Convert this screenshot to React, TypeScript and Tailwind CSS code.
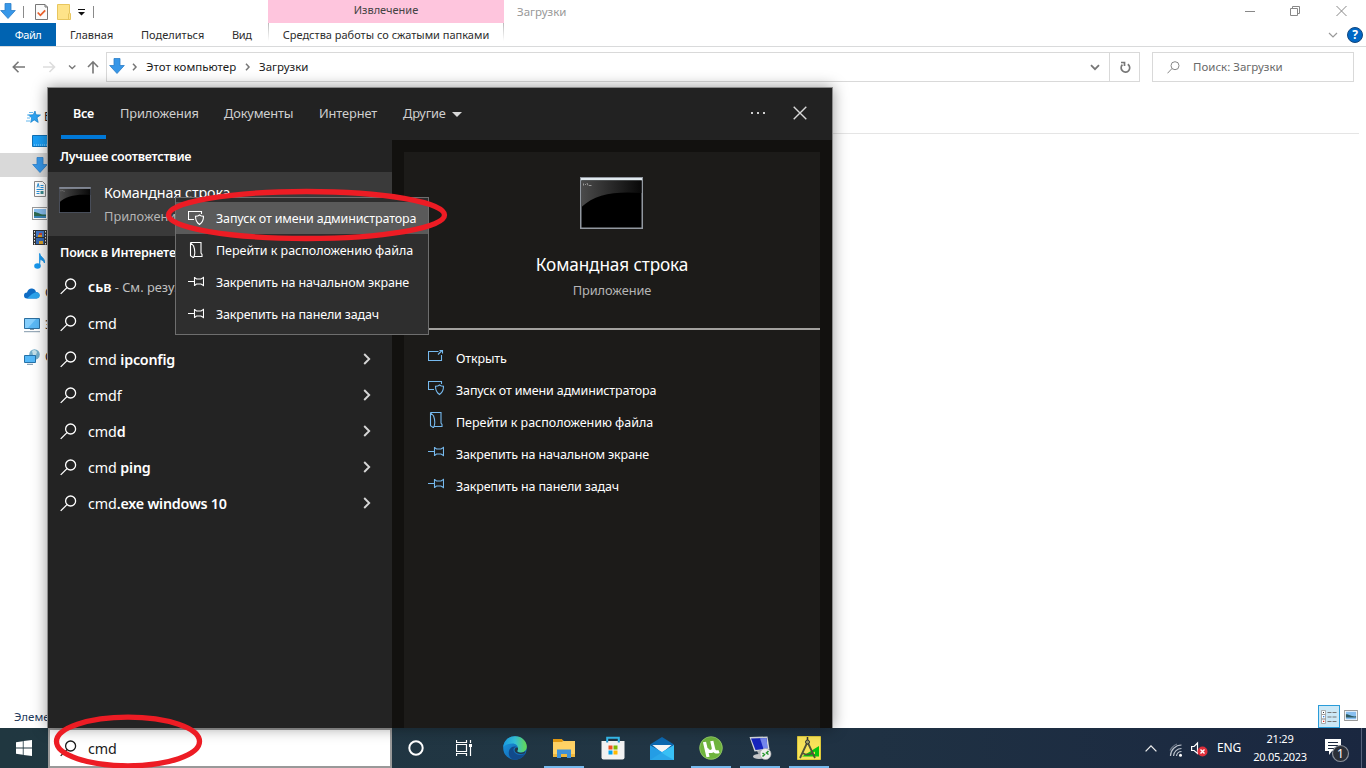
import type { ReactNode } from "react";

type P = { className?: string };

const DownArrow = ({ className = "" }: P) => (
  <svg className={className} width="16" height="16" viewBox="0 0 16 16">
    <path d="M5 .5h6v7h4.300L8 15.500.700 7.500H5z" fill="#3797e8" stroke="#2c7dc8" strokeWidth=".8" />
  </svg>
);
const Search = ({ className = "" }: P) => (
  <svg className={className} width="17" height="17" viewBox="0 0 17 17" fill="none" stroke="currentColor" strokeWidth="1.3">
    <circle cx="10.600" cy="6" r="5" />
    <path d="M7 9.600.700 15.900" />
  </svg>
);
const Admin = () => (
  <svg width="16" height="16" viewBox="0 0 16 16" fill="none" stroke="currentColor" strokeWidth="1.1">
    <path d="M13.500 4V1.500h-13v8H6" />
    <path d="M11.500 5c-1.200 1-2.500 1.300-4 1.300 0 4 .8 6.200 4 8.200 3.200-2 4-4.200 4-8.200-1.500 0-2.800-.3-4-1.300z" />
  </svg>
);
const FileLoc = () => (
  <svg width="16" height="16" viewBox="0 0 16 16" fill="none" stroke="currentColor" strokeWidth="1.1">
    <path d="M2.500.500h10.500v10.500l1 1.500v2H6M2.500.500v13.300l3 1.900c1.500-3 1.500-8 0-12L2.500.800" />
  </svg>
);
const Pin = () => (
  <svg width="16" height="16" viewBox="0 0 16 16" fill="none" stroke="currentColor" strokeWidth="1.1">
    <path d="M0 7.500h6.500M6.500 3v9M6.500 3.500l2 1.500h4.500l2.500-1.500v8L13 10H8.500l-2 1.500" />
  </svg>
);
const Open = () => (
  <svg width="16" height="16" viewBox="0 0 16 16" fill="none" stroke="currentColor" strokeWidth="1.1">
    <path d="M10.500 3.500H.500v9h13V7M10 6.500l4-4M11.500 2.500h3V5.500" />
  </svg>
);
const Picture = () => (
  <svg width="16" height="13" viewBox="0 0 16 13">
    <rect x=".5" y=".5" width="15" height="12" fill="#fff" stroke="#9a9a9a" />
    <path d="M2 2h12v9H2z" fill="#88bff0" />
    <path d="M2 5c4 0 6 3 12 2.500V9H2z" fill="#2e6b52" />
    <path d="M2 9h12v2H2z" fill="#3c86b8" />
  </svg>
);

const Console = ({ className = "", big = false }: P & { big?: boolean }) => (
  <svg className={className} width={big ? 63 : 32} height={big ? 52 : 26} viewBox="0 0 63 52" preserveAspectRatio="none">
    <defs>
      <linearGradient id="glass" x1="0" x2="1">
        <stop offset="0" stopColor="#4a4a4a" />
        <stop offset="1" stopColor="#080808" />
      </linearGradient>
    </defs>
    <rect x=".7" y=".7" width="61.600" height="50.600" fill="#000" stroke={big ? "#9298a0" : "#596070"} strokeWidth="1.600" />
    <path d="M1.500 3.500h60V16C35 14 15 17 1.500 30z" fill="url(#glass)" />
    <path d="M1 1h61v2.300H1z" fill={big ? "#e0e9ee" : "#b8c0d0"} />
    <path d="M3.500 6.500v2M5 7.500h1M7 6l1 2.500M9 8.500h2.500" stroke="#999" />
  </svg>
);

const menu: [ReactNode, string, string][] = [
  [<Admin />, "Запуск от имени администратора", "tracking-[-0.14px]"],
  [<FileLoc />, "Перейти к расположению файла", "tracking-[-0.04px]"],
  [<Pin />, "Закрепить на начальном экране", "tracking-[-0.15px]"],
  [<Pin />, "Закрепить на панели задач", "tracking-[-0.15px]"],
];

const suggestions: [string, string, boolean][] = [
  ["cmd", "", false],
  ["cmd ", "ipconfig", true],
  ["cmdf", "", true],
  ["cmd", "d", true],
  ["cmd ", "ping", true],
  ["cmd", ".exe windows 10", true],
];

function TitleBar() {
  return (
    <header className="flex h-[23px] items-center">
      <DownArrow className="-mt-px" />
      <span className="ml-[7px] h-3 w-px bg-[#8a8a8a]" />
      <svg className="ml-[11px]" width="13" height="16" viewBox="0 0 13 16">
        <path d="M.5.5H10L12.500 3v12.500H.5z" fill="#fafafa" stroke="#777" />
        <path d="M10 .5V3h2.500" fill="none" stroke="#777" />
        <path d="m2.700 8.500 2.700 2.800 4.800-5" fill="none" stroke="#e8602c" strokeWidth="1.800" />
      </svg>
      <svg className="ml-[9px]" width="14" height="16" viewBox="0 0 14 16">
        <path d="M.5.5h12v9h1v6H.5z" fill="#fee389" stroke="#e8c65e" />
        <path d="M11.500 9.500v6" stroke="#e8c65e" />
      </svg>
      <svg className="ml-[7px] mt-[3px]" width="7" height="8" viewBox="0 0 7 8">
        <path d="M0 0h7v1H0zM0 3h7L3.500 6.500z" fill="#111" />
      </svg>
      <span className="ml-2 h-3 w-px bg-[#8a8a8a]" />
      <div className="ml-[174px] h-[23px] w-[236px] bg-[#fec5dd] text-center text-[11px] leading-[20px] text-[#444]">Извлечение</div>
      <span className="ml-[13px] text-[11.500px] text-[#999]">Загрузки</span>
      <div className="ml-auto flex items-center pr-[18px] text-[#888]">
        <svg className="-mt-[2px]" width="104" height="12" viewBox="0 0 104 12" fill="none" stroke="currentColor">
          <path d="M1 6.500h10M46.500 3.500h7v7h-7zM48.500 3V1.500h7v7h-2M92.500 1l10 10M102.500 1l-10 10" />
        </svg>
      </div>
    </header>
  );
}

function RibbonTabs() {
  return (
    <nav className="flex h-6 border-b border-[#d9dadb] text-[11px] leading-6 text-[#2d2d2d]">
      <div className="h-[23px] w-14 bg-[#0063b1] text-center tracking-[-0.5px] text-white">Файл</div>
      <span className="ml-[14px] w-[71px]">Главная</span>
      <span className="w-[91px]">Поделиться</span>
      <span className="w-9 tracking-[-0.4px]">Вид</span>
      <span className="h-[18px] w-px bg-gradient-to-b from-[#bbb] to-white" />
      <span className="w-[234px] text-center">Средства работы со сжатыми папками</span>
      <span className="h-[18px] w-px bg-gradient-to-b from-[#bbb] to-white" />
      <div className="ml-auto flex items-center gap-[9px] pr-[3px]">
        <svg width="10" height="6" viewBox="0 0 10 6" fill="none" stroke="#999" strokeWidth="1.200"><path d="m1 1 4 4 4-4" /></svg>
        <span className="flex h-4 w-4 items-center justify-center rounded-full border border-[#12477f] bg-[#0067c5] text-[12px] font-bold leading-4 text-white">?</span>
      </div>
    </nav>
  );
}

function AddressBar() {
  return (
    <div className="flex h-[41px] items-center text-[11.5px] text-[#1b1b1b]">
      <svg className="-mt-px ml-3" width="88" height="16" viewBox="0 0 88 16" fill="none" stroke="#777" strokeWidth="1.600">
        <path d="M1.500 8H13M6.500 2.800 1.300 8l5.200 5.200" />
        <path d="M31 8h11.500M37.500 3l5 5-5 5" stroke="#ddd" />
        <path d="m57 6.500 3.200 3 3.200-3" strokeWidth="1.300" />
        <path d="M81 14.500V3M76 8l5-5.200L86 8" />
      </svg>
      <div className="-mt-px ml-[6px] flex h-[30px] w-[1034px] items-center border border-[#d9d9d9]">
        <DownArrow className="ml-[2px] -mt-[3px]" />
        <svg className="ml-[7px]" width="6" height="8" viewBox="0 0 6 8" fill="none" stroke="#777" strokeWidth="1.500"><path d="m1 .8 3 3.200-3 3.200" /></svg>
        <span className="-mt-px ml-2 w-[91px]">Этот компьютер</span>
        <svg className="ml-[8px]" width="6" height="8" viewBox="0 0 6 8" fill="none" stroke="#777" strokeWidth="1.500"><path d="m1 .8 3 3.200-3 3.200" /></svg>
        <span className="-mt-px ml-2">Загрузки</span>
        <svg className="ml-auto mr-[9px] mt-px" width="10" height="7" viewBox="0 0 10 7" fill="none" stroke="#777" strokeWidth="1.800"><path d="m1 1.200 4 4 4-4" /></svg>
        <div className="flex h-full w-[30px] items-center justify-center border-l border-[#d9d9d9]">
          <svg width="12" height="13" viewBox="0 0 12 13" fill="none" stroke="#777" strokeWidth="1.700">
            <path d="M8.800 3.200A4.300 4.300 0 1 1 3.400 3.700" />
            <path d="M2 1.500h3.500V5" />
          </svg>
        </div>
      </div>
      <div className="-mt-px ml-3 flex h-[30px] w-[202px] items-center border border-[#d9d9d9] pl-[14px] text-[#6a6a6a]">
        <svg width="13" height="13" viewBox="0 0 13 13" fill="none" stroke="#888"><circle cx="8" cy="4.700" r="4" /><path d="M5 7.500.500 12.300" /></svg>
        <span className="-mt-px ml-[13px]">Поиск: Загрузки</span>
      </div>
    </div>
  );
}

function NavTree() {
  return (
    <aside className="flex w-12 flex-col pt-[17px] text-[12px] text-[#222]">
      <div className="flex h-6 items-center gap-[3px] pl-[26px]">
        <svg className="shrink-0" width="15" height="14" viewBox="0 0 15 14">
          <path d="m9 1 1 3.800 4.500.2-3.500 2.700 1.200 4.700-4-2.500-3.500 2.500 1-4.500L2.500 5l4.700-.2z" fill="#2ea3f2" stroke="#1380cc" strokeWidth=".7" />
          <path d="M3 2.500h4M1 5h3M1 8h3M0 11h4" stroke="#65b8ee" />
        </svg>
        <span>Б</span>
      </div>
      <div className="flex h-6 items-center pl-8">
        <svg width="16" height="12" viewBox="0 0 16 12"><path d="M.5.500h18v11H.5z" fill="#1ba0f7" stroke="#1070b5" /><path d="M2 10h14" stroke="#9ad5ff" strokeDasharray="1 1" /></svg>
      </div>
      <div className="flex h-6 items-center bg-[#d9d9d9] pl-8"><DownArrow /></div>
      <div className="flex h-6 items-center pl-[34px]">
        <svg width="12" height="16" viewBox="0 0 12 16"><path d="M.5.500h8l3 3v12H.5z" fill="#fff" stroke="#8a8a8a" /><path d="M6.500 4.500h3M6.500 6.500h3M2.500 8.500h7M2.500 10.500h3M2.500 12.500h3M3 6.500l1.200-4 1 4" stroke="#2692dc" fill="none" /><path d="M6.500 10h3v3h-3z" fill="#3d8d90" /></svg>
      </div>
      <div className="flex h-6 items-center pl-8"><Picture /></div>
      <div className="flex h-6 items-center pl-[33px]">
        <svg width="14" height="15" viewBox="0 0 14 15"><path d="M0 0h14v15H0z" fill="#333" /><path d="M3 1h8v6H3z" fill="#4278c8" /><path d="M3 8h8v6H3z" fill="#3569b4" /><path d="M5 5h4v2H5zM6 11h4v3H6z" fill="#dba32a" /><path d="M6 3h3v2H6z" fill="#cb4237" /><path d="M1.500 1v14M12.500 1v14" stroke="#eee" strokeDasharray="1.500 1.500" /></svg>
      </div>
      <div className="flex h-6 items-center pl-[34px]">
        <svg width="12" height="16" viewBox="0 0 12 16"><ellipse cx="3.500" cy="13" rx="3.300" ry="2.700" fill="#1898ee" /><path d="M5.700 13V.5C6 4 11 4.500 10.500 10 9.500 7.500 8 7 6.500 6.500" fill="#1898ee" stroke="#1898ee" strokeWidth="1" /></svg>
      </div>
      <div className="mt-2 flex h-6 items-center gap-[5px] pl-6">
        <svg className="shrink-0" width="16" height="11" viewBox="0 0 16 11"><path d="M3 10.500a3 3 0 0 1 0-6C4 1 6.500 0 9 .8c2 .5 2.600 2 3 3.200a3.300 3.300 0 0 1 .5 6.500z" fill="#0f6cc4" /><path d="m3 10.500 5-4.500 3-1.500c3-1 5 1 4.900 3-.1 2-1.500 3-3 3z" fill="#2ea4ec" /></svg>
        <span>O</span>
      </div>
      <div className="mt-2 flex h-6 items-center gap-[5px] pl-6">
        <svg className="shrink-0" width="16" height="16" viewBox="0 0 16 16"><path d="M.5 1.500h15v10H.5z" fill="#5ab8f5" stroke="#2d6f9f" /><path d="M1 2h11L4 11H1z" fill="#85cefc" /><path d="M6 12.500h4M0 14.700h16" stroke="#8298aa" /></svg>
        <span>Э</span>
      </div>
      <div className="mt-2 flex h-6 items-center gap-[5px] pl-6">
        <svg className="shrink-0" width="16" height="16" viewBox="0 0 16 16"><circle cx="10.500" cy="5.500" r="5.300" fill="#74aeca" /><path d="M8 2c2-2 4-1 5 1l-1 3-3 0z" fill="#c5e0e8" /><path d="M.5 6.500h11v7H.5z" fill="#55b8f7" stroke="#2672a8" /><path d="M3 15.300h6" stroke="#6d8da6" /></svg>
        <span>С</span>
      </div>
      <div className="mt-auto flex h-6 items-center whitespace-nowrap pl-[14px] pt-px text-[11.5px] text-[#1e395b]">Элеме</div>
    </aside>
  );
}

function Explorer() {
  return (
    <section className="flex h-[728px] flex-col bg-white">
      <TitleBar />
      <RibbonTabs />
      <AddressBar />
      <div className="flex flex-1">
        <NavTree />
        <div className="flex flex-1 flex-col">
          <div className="mr-[7px] h-[46px] border-b border-[#e5e5e5]" />
          <div className="mt-auto flex items-end justify-end pr-2">
            <div className="flex h-[23px] w-[22px] items-center justify-center border border-[#2a9cd9] bg-[#cce8f6]">
              <svg width="16" height="14" viewBox="0 0 16 14">
                <path d="M.5.500h4v4h-4zM.5 4.500h4v4.500h-4zM.5 9h4v4.500h-4z" fill="#fff" stroke="#999" strokeWidth=".8" />
                <path d="M6.500 2.500h9M6.500 7h9M6.500 11.500h9" stroke="#777" strokeDasharray="4 1" />
                <path d="M2 2h1v1H2z" fill="#333" /><path d="M2 6h1.300v1.300H2z" fill="#2a7ae0" /><path d="M2 10.700h1.300V12H2z" fill="#e03020" />
              </svg>
            </div>
            <div className="mb-[6px] ml-1 flex h-[13px] w-[14px] items-center"><svg width="14" height="11" viewBox="0 0 16 13"><rect x=".5" y=".5" width="15" height="12" fill="#fff" stroke="#888" /><path d="M2 2h12v9H2z" fill="#88bff0" /><path d="M2 5c4 0 6 3 12 2.500V9H2z" fill="#2e5b62" /></svg></div>
          </div>
        </div>
      </div>
    </section>
  );
}

function SearchPanel() {
  return (
    <section className="absolute left-[47px] top-[87px] flex h-[641px] w-[786px] flex-col border border-b-0 border-[#8c8c8c] bg-[#222222] shadow-[0_0_14px_rgba(0,0,0,0.4)]">
      <nav className="flex h-[52px] shrink-0 items-center text-[12.8px] text-[#cfcfcf]">
        <div className="ml-[13px] flex h-full w-[45px] flex-col">
          <span className="h-[47px] text-center text-[12.5px] font-semibold leading-[52px] tracking-[-0.2px] text-white">Все</span>
          <span className="h-1 bg-[#0078d7]" />
        </div>
        <span className="ml-[14px] w-[104px] tracking-[-0.08px]">Приложения</span>
        <span className="w-[95px] tracking-[-0.15px]">Документы</span>
        <span className="w-[84px] tracking-[-0.1px]">Интернет</span>
        <span className="w-[49px] tracking-[-0.2px]">Другие</span>
        <svg width="10" height="5" viewBox="0 0 10 5"><path d="M0 0h10L5 5z" fill="#d8d8d8" /></svg>
        <svg className="ml-auto -mt-[2px]" width="16" height="2" viewBox="0 0 16 2"><path d="M1 0h2v2H1zM7 0h2v2H7zM13 0h2v2h-2z" fill="#cfcfcf" /></svg>
        <svg className="-mt-[2px] ml-[27px] mr-[25px]" width="14" height="14" viewBox="0 0 14 14" stroke="#d8d8d8" strokeWidth="1.400"><path d="m.7.7 12.600 12.600M13.300.700.700 13.300" /></svg>
      </nav>
      <div className="flex flex-1">
        <div className="w-[344px] bg-[#232323] text-white">
          <h2 className="h-8 pl-3 text-[12.5px] font-semibold leading-[34px] tracking-[-0.24px]">Лучшее соответствие</h2>
          <div className="flex h-16 bg-[#3a3a3a] pl-3">
            <Console className="-ml-px mt-[15px]" />
            <div className="ml-[13px] pt-[11px]">
              <div className="text-[14.3px] leading-5 tracking-[-0.12px]">Командная строка</div>
              <div className="mt-[3px] text-[12.8px] leading-5 text-[#b5b5b5]">Приложение</div>
            </div>
          </div>
          <h2 className="h-[33px] pl-3 text-[12.5px] font-semibold leading-[34px] tracking-[-0.22px]">Поиск в Интернете</h2>
          <div className="flex h-9 items-center pl-3 pb-px">
            <Search />
            <span className="ml-[11px] whitespace-pre text-[12.8px] text-[#c0c0c0]"><b className="text-[14px] font-semibold text-white">сьв</b> - См. резу...</span>
          </div>
          {suggestions.map(([plain, bold, arrow]) => (
            <div key={plain + bold} className="flex h-9 items-center pl-3">
              <Search />
              <span className="ml-[11px] whitespace-pre pt-px text-[14.3px] tracking-[-0.1px]">{plain}<b className="font-semibold tracking-[-0.22px]">{bold}</b></span>
              {arrow && <svg className="ml-auto mr-[21px]" width="8" height="12" viewBox="0 0 8 12" fill="none" stroke="#d5d5d5" strokeWidth="1.900"><path d="m1.200 1 5 5-5 5" /></svg>}
            </div>
          ))}
        </div>
        <div className="flex-1 bg-[#12110f] px-3 pt-3">
          <div className="h-full bg-[#1c1b19] text-white">
            <div className="flex h-[178px] flex-col items-center border-b-2 border-[#a3a19e]">
              <Console big className="mr-[2px] mt-[25px]" />
              <div className="mt-6 text-[17.2px] leading-6 tracking-[-0.12px]">Командная строка</div>
              <div className="mt-[3px] text-[12.8px] leading-5 tracking-[-0.08px] text-[#b5b5b5]">Приложение</div>
            </div>
            <ul className="pt-3 text-[12.5px]">
              <li className="flex h-8 items-center pl-6"><span className="-mt-1 text-[#76b9ed]"><Open /></span><span className="ml-3 pt-[2px] tracking-[-0.15px]">Открыть</span></li>
              {menu.map(([icon, label, tracking]) => (
                <li key={label} className="flex h-8 items-center pl-6"><span className="-mt-1 text-[#76b9ed]">{icon}</span><span className={"ml-3 pt-[2px] " + tracking}>{label}</span></li>
              ))}
            </ul>
          </div>
        </div>
      </div>
    </section>
  );
}

function ContextMenu() {
  return (
    <ul className="absolute left-[175px] top-[197px] w-[254px] border border-[#6e6e6e] bg-[#2e2e2e] py-1 text-[12.5px] text-white">
      {menu.map(([icon, label, tracking], i) => (
        <li key={label} className={"flex h-8 items-center pl-3 " + (i === 0 ? "bg-[#5a5a5a]" : "")}><span className="-mt-px">{icon}</span><span className={"ml-3 pt-[2px] " + tracking}>{label}</span></li>
      ))}
    </ul>
  );
}

function AppCell({ children, open = false }: { children: ReactNode; open?: boolean }) {
  return <div className={"mr-[9px] flex h-10 w-10 items-center justify-center border-b-2 pt-[2px] " + (open ? "border-[#76b9ed]" : "border-transparent")}>{children}</div>;
}

function Taskbar() {
  return (
    <footer className="flex h-10 items-center bg-gradient-to-r from-[#203740] via-[#213544] to-[#1a2740] text-white">
      <div className="flex w-12 justify-center">
        <svg width="16" height="16" viewBox="0 0 16 16" fill="#fff"><path d="M0 2.200 6.800 1.200v6.400H0zM7.600 1.100 16 0v7.600H7.600zM0 8.400h6.800v6.400L0 13.800zM7.600 8.400H16V16l-8.400-1.100z" /></svg>
      </div>
      <div className="flex h-10 w-[344px] items-center border-2 border-[#999] bg-white pl-[10px] text-[#1b1b1b]">
        <Search />
        <span className="ml-[11px] pt-px text-[14.3px] tracking-[-0.1px]">cmd</span>
      </div>
      <div className="flex w-12 justify-center"><svg width="16" height="16" viewBox="0 0 16 16"><circle cx="8" cy="8" r="6.700" fill="none" stroke="#fff" strokeWidth="2" /></svg></div>
      <div className="flex w-12 justify-center">
        <svg width="16" height="16" viewBox="0 0 16 16" fill="none" stroke="#fff"><path d="M.5 4.500h10v7H.5zM.5 0v2.500h10V0M.5 16v-2.500h10V16M14.500 0v3M14.500 7v9" strokeWidth="1.200" /><path d="M13 4h3v3h-3z" fill="#fff" stroke="none" /></svg>
      </div>
      <div className="ml-[7px] flex">
        <AppCell>
          <svg width="24" height="24" viewBox="0 0 24 24">
            <defs>
              <linearGradient id="eg" x1="0" x2="1"><stop offset="0" stopColor="#199be2" /><stop offset=".5" stopColor="#35c1d8" /><stop offset="1" stopColor="#66da4e" /></linearGradient>
              <linearGradient id="eb" x1="0" y1="0" x2="1" y2="1"><stop offset="0" stopColor="#1b9de2" /><stop offset="1" stopColor="#0f56a5" /></linearGradient>
            </defs>
            <circle cx="12" cy="12" r="11.800" fill="url(#eb)" />
            <path d="M.3 11C1 4 6 .2 12 .2c7 0 11.800 5 11.800 10.300 0 4-3 6-6 6-2.500 0-4.200-1-3.600-2 2-3-.2-7-4.700-7C5 7.500 1.500 9 .3 11z" fill="url(#eg)" />
            <path d="M10 23.500C5 21.500 4 14 9 11c2-1 4.500-.5 5.500.8C12 10.500 10.300 12 10.500 14c.4 4 6 6.600 11.500 4-2.500 4-7 6.500-12 5.500z" fill="#114a8b" />
            <path d="M14.500 11.500c1 1 .5 2.500-.2 3.300-.5 1 1.200 1.900 3.500 1.900 2 0 3.500-.7 4.500-1.700l-.7 2.200c-3.500 1.500-8.300.8-9.800-2-.8-1.700.500-4 2.700-3.700z" fill="#223749" />
          </svg>
        </AppCell>
        <AppCell open>
          <svg width="22" height="19" viewBox="0 0 22 19"><path d="M0 1h9l2 1h11v16H0z" fill="#ffd265" /><path d="M0 0h9l1 2-1 1H0z" fill="#e59b12" /><path d="M0 15h22v3H0z" fill="#efb83e" /><path d="M4 19v-8.500h14V19h-4v-4H8v4z" fill="#3f91d8" /></svg>
        </AppCell>
        <AppCell>
          <svg width="24" height="24" viewBox="0 0 24 24"><path d="M6.200 6V1.800h11.600V6" fill="none" stroke="#36bced" strokeWidth="2" /><path d="M.5 5h23v16.500a2 2 0 0 1-2 2h-19a2 2 0 0 1-2-2z" fill="#f2f2f2" /><path d="M7.500 9.500h4v4h-4z" fill="#f25022" /><path d="M12.500 9.500h4v4h-4z" fill="#7fba00" /><path d="M7.500 14.500h4v4h-4z" fill="#00a4ef" /><path d="M12.500 14.500h4v4h-4z" fill="#ffb900" /><path d="M6.200 5v1.500M17.800 5v1.500" stroke="#2595ce" strokeWidth="2" /></svg>
        </AppCell>
        <AppCell>
          <svg width="24" height="23" viewBox="0 0 24 23"><path d="M0 7.500 12 0l12 7.500-12 9z" fill="#0d68af" /><path d="M2.500 8h19L12 16z" fill="#f5f5f5" /><path d="M0 8.200 12 15l12-7V23H0z" fill="#27a3ea" /><path d="M0 23 24 8v15z" fill="#38c0f5" /><path d="M0 8.200 16 18.500 24 23H0z" fill="#2399e2" opacity=".65" /></svg>
        </AppCell>
        <AppCell open>
          <svg width="24" height="24" viewBox="0 0 24 24"><circle cx="12" cy="12" r="11.500" fill="#6fb43d" /><circle cx="12" cy="12" r="11.300" fill="none" stroke="#9bca77" strokeWidth=".7" /><path d="m5.500 6 3.500 15M7.500 12.500c1 4 6.500 4 7 0l-1.700-7.500M14.500 12.500c.5 3.500 3 4 5.500 3" fill="none" stroke="#fff" strokeWidth="3.200" /></svg>
        </AppCell>
        <AppCell open>
          <svg width="24" height="24" viewBox="0 0 24 24"><path d="m1.500 1 18-.5 2 13-15 2z" fill="#d5d8dc" /><path d="m3 2.500 15.500-.5 1 10.500-12 1.500z" fill="#1624bd" /><path d="m12 2.200 6.500-.2 1 10.500-4 .5z" fill="#7486ed" /><path d="m9 15 6-1 1 5-4 2z" fill="#aeb2b5" /><ellipse cx="11" cy="20.500" rx="6" ry="2.500" fill="#c4c6c9" /><circle cx="17.500" cy="18" r="5.500" fill="#eee" stroke="#aaa" strokeWidth=".6" /><path d="m14.500 17 2 1.500-2 2M20.500 15l-2 2 2 1.500" fill="none" stroke="#24952b" strokeWidth="1.500" /></svg>
        </AppCell>
        <AppCell open>
          <svg width="24" height="24" viewBox="0 0 24 24"><path d="M.5.500h23v23H.5z" fill="#f8e35a" stroke="#ddc83a" /><path d="M5 20.500 22 10v10.500z" fill="#07c40f" /><path d="m14 18 4-2.500V18z" fill="#fae34a" /><path d="M10.500 6 3 22M10.500 6 18 22M5.500 17c3 2 7 2 10 0" fill="none" stroke="#505338" strokeWidth="1.800" /><path d="M10.500 1v4" stroke="#333" strokeWidth="1.500" /><circle cx="10.500" cy="6" r="2" fill="#a5a56b" stroke="#333" /></svg>
        </AppCell>
      </div>
      <div className="ml-auto flex h-10 items-center">
        <svg width="12" height="7" viewBox="0 0 12 7" fill="none" stroke="#eee" strokeWidth="1.300"><path d="m.6 6.400 5.400-5.500 5.400 5.500" /></svg>
        <svg className="ml-[12px] mt-1" width="14" height="14" viewBox="0 0 14 14" fill="none" stroke="#bbc2cc" strokeWidth="1.200">
          <path d="M1.500 13A11 11 0 0 1 12.500 2M4.500 13a8 8 0 0 1 8-7.500M7.500 13a5 5 0 0 1 5-4.500" /><path d="M1 7.500A13 13 0 0 1 8 1" opacity=".5" /><circle cx="11.500" cy="12.300" r="1.500" fill="#fff" stroke="none" />
        </svg>
        <svg className="ml-2 mt-px" width="17" height="16" viewBox="0 0 17 16"><path d="M.6 5.500h2.500L6.500 2v10.500L3.100 9.500H.6z" fill="none" stroke="#fff" strokeWidth="1.200" /><circle cx="11.500" cy="10.500" r="5" fill="#df2f3b" /><path d="m9.500 8.500 4 4M13.500 8.500l-4 4" stroke="#fff" strokeWidth="1.400" /></svg>
        <span className="ml-[9px] w-[25px] text-[12px] tracking-[-0.1px]">ENG</span>
        <div className="ml-[5px] w-[66px] pb-[1px] text-center text-[11px] leading-[18px] tracking-[-0.25px]"><div>21:29</div><div>20.05.2023</div></div>
        <svg className="ml-[11px] mt-[6px]" width="26" height="26" viewBox="0 0 26 26"><path d="M1 1h16v12H8l-3 4v-4H1z" fill="#fff" /><path d="M4 4.500h10M4 7.500h10M4 10.500h7" stroke="#1b2940" strokeWidth="1.200" /><circle cx="16.500" cy="15.500" r="8" fill="#2b2f38" stroke="#8a8f99" strokeWidth="1.200" /><text x="16.500" y="20" textAnchor="middle" fontSize="12" fill="#fff">1</text></svg>
        <span className="ml-[11px] mr-1 h-10 w-px bg-[#56617a]" />
      </div>
    </footer>
  );
}

export default function App() {
  return (
    <main className="relative h-[768px] w-[1366px] overflow-hidden bg-white font-['Noto_Sans','Open_Sans',sans-serif]">
      <Explorer />
      <Taskbar />
      <SearchPanel />
      <ContextMenu />
      <svg className="pointer-events-none absolute left-0 top-0" width="460" height="768" viewBox="0 0 460 768" fill="none" stroke="#ed1c24" strokeWidth="5.300">
        <ellipse cx="306.500" cy="215" rx="138" ry="23.500" />
        <ellipse cx="128" cy="741.500" rx="71.500" ry="24.300" />
      </svg>
    </main>
  );
}
